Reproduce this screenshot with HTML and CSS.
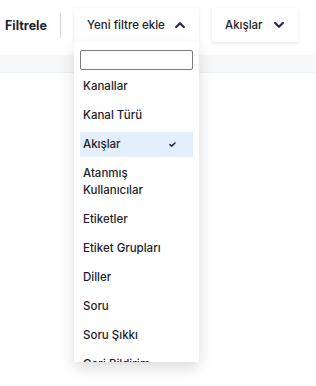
FILE: index.html
```html
<!DOCTYPE html>
<html lang="tr">
<head>
	<meta charset="UTF-8">
	<title>Filtrele</title>
	<link rel="stylesheet" href="styles.css">
</head>
<body>
	<div class="page">
		<div class="toolbar">
			<span class="toolbar-title">Filtrele</span>
			<span class="toolbar-divider"></span>
			<div class="drop">
				<div class="drop-btn drop-btn-add">
					<span>Yeni filtre ekle</span>
					<svg class="chevron" width="10" height="6" viewBox="0 0 10 6"><path d="M1.2 5 L5 1.3 L8.8 5" fill="none" stroke="#2b2941" stroke-width="2.2" stroke-linecap="round" stroke-linejoin="round"/></svg>
				</div>
				<div class="drop-menu">
					<input class="drop-search" type="text">
					<ul class="drop-list">
						<li>Kanallar</li>
						<li>Kanal Türü</li>
						<li class="selected">Akışlar
							<svg class="check" width="7" height="5" viewBox="0 0 7 5"><path d="M1 2.6 L2.7 4.1 L6 1" fill="none" stroke="#2b2941" stroke-width="1.6" stroke-linecap="round" stroke-linejoin="round"/></svg>
						</li>
						<li>Atanmış<br>Kullanıcılar</li>
						<li>Etiketler</li>
						<li>Etiket Grupları</li>
						<li>Diller</li>
						<li>Soru</li>
						<li>Soru Şıkkı</li>
						<li>Geri Bildirim</li>
					</ul>
				</div>
			</div>
			<div class="drop-btn drop-btn-flow">
				<span>Akışlar</span>
				<svg class="chevron" width="10" height="6" viewBox="0 0 10 6"><path d="M1.2 1 L5 4.7 L8.8 1" fill="none" stroke="#2b2941" stroke-width="2.2" stroke-linecap="round" stroke-linejoin="round"/></svg>
			</div>
		</div>
		<div class="subbar"></div>
		<div class="content"></div>
	</div>
</body>
</html>
```
FILE: styles.css
```css
*{margin:0; padding:0; box-sizing:border-box;}
li{list-style:none;}
html, body{height:100%;}
body{font-family:Inter, "Noto Sans", sans-serif; color:#1d1c2b; background:#fff;}

.page{display:flex; flex-direction:column; min-height:100%;}
.toolbar{display:flex; align-items:center; padding:8px 0 0 5px; height:42px; position:relative; z-index:2;}
.toolbar-title{width:42px; font-size:12.5px; font-weight:700; color:#24232f; white-space:nowrap;}
.toolbar-divider{width:1px; height:25px; background:#d9d7e4; margin:0 13px;}

.drop{position:relative;}
.drop-btn{display:flex; align-items:center; justify-content:space-between; height:34px; background:#fff; font-size:11.5px; font-weight:500; box-shadow:0 1px 3px rgba(0,0,0,.12);}
.drop-btn-add{width:125px; padding:0 14px 0 13px;}
.drop-btn-flow{width:86px; padding:0 14px 0 13px; margin-left:13px;}
.chevron{display:block;}

.drop-menu{position:absolute; left:0; top:34px; width:125px; height:320px; overflow:hidden; background:#fff; padding:8px 6px 0; box-shadow:0 6px 14px rgba(0,0,0,.14);}
.drop-search{display:block; width:113px; height:20px; border:1px solid #7a7a7a; border-radius:2px; outline:none;}
.drop-list li{display:flex; align-items:center; justify-content:space-between; margin-top:4px; padding:4px 17px 4px 3px; font-size:11.5px; font-weight:500; line-height:17px;}
.drop-list li.selected{background:#e3effc;}
.check{display:block;}

.subbar{height:18px; margin-top:13px; background:#f7f8fa; border-bottom:1px solid #eef0f3;}
.content{flex:1;}
```
